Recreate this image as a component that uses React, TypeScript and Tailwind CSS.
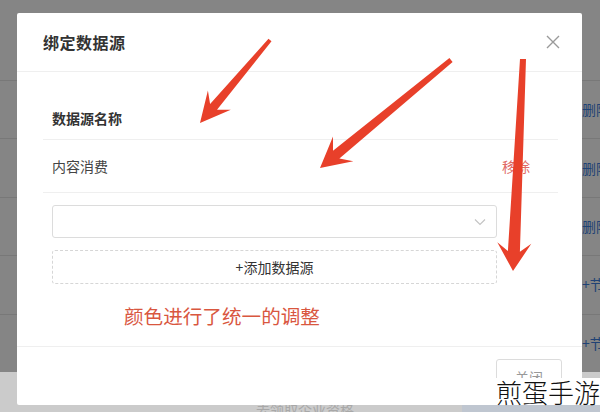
import React from "react";

type P = [number, number];

function arrowPoints(tail: P, tip: P, headLen: number, headW: number, tailW: number, neckW: number): string {
  const dx = tip[0] - tail[0];
  const dy = tip[1] - tail[1];
  const len = Math.hypot(dx, dy);
  const ux = dx / len;
  const uy = dy / len;
  const nx = -uy;
  const ny = ux;
  const base: P = [tip[0] - ux * headLen, tip[1] - uy * headLen];
  const neck: P = [tip[0] - ux * (headLen * 0.7), tip[1] - uy * (headLen * 0.7)];
  const pts: P[] = [
    [tail[0] + (nx * tailW) / 2, tail[1] + (ny * tailW) / 2],
    [neck[0] + (nx * neckW) / 2, neck[1] + (ny * neckW) / 2],
    [base[0] + (nx * headW) / 2, base[1] + (ny * headW) / 2],
    tip,
    [base[0] - (nx * headW) / 2, base[1] - (ny * headW) / 2],
    [neck[0] - (nx * neckW) / 2, neck[1] - (ny * neckW) / 2],
    [tail[0] - (nx * tailW) / 2, tail[1] - (ny * tailW) / 2],
  ];
  return pts.map((p) => p.map((v) => v.toFixed(1)).join(",")).join(" ");
}

const rows = ["删除", "删除", "删除", "+节点", "+节点"];

export default function App() {
  return (
    <div
      className="relative w-[600px] h-[412px] overflow-hidden bg-[#cbcbcb]"
      style={{ fontFamily: '"Noto Sans CJK SC", "Noto Sans", sans-serif' }}
    >
      {/* underlying page */}
      <div className="h-[372px] bg-white pt-[80px] flex flex-col">
        {rows.map((r, i) => (
          <div
            key={i}
            className="h-[60px] border-t border-[#e6e6e6] flex items-center pl-[582px] text-[14px] text-[#3f7fe0] whitespace-nowrap"
          >
            {r}
          </div>
        ))}
      </div>
      <div className="h-[40px] pl-[256px] pt-[30px] text-[14px] text-[#a8a8a8] whitespace-nowrap leading-none">
        去领取企业资格
      </div>

      {/* overlay */}
      <div className="absolute left-0 top-0 w-[600px] h-[372px] bg-black/[0.48]" />
      <div className="absolute left-[462px] top-[404px] w-[138px] h-[8px] bg-[#b7c3d3]/60" />

      {/* modal */}
      <div className="absolute left-[17px] top-[13px] w-[565px] h-[392px] bg-white rounded-[2px] flex flex-col">
        <div className="h-[59px] shrink-0 border-b border-[#efefef] flex items-center justify-between pl-[26px] pr-[24px]">
          <span className="text-[16px] font-bold text-[#333] tracking-[0.5px]">绑定数据源</span>
          <svg width="14" height="14" viewBox="0 0 14 14" className="mr-[-2px]">
            <path d="M1 1 L13 13 M13 1 L1 13" stroke="#9a9a9a" strokeWidth="1.4" fill="none" />
          </svg>
        </div>

        <div className="pt-[26px] pl-[26px] pr-[24px]">
          <div className="h-[42px] border-b border-[#efefef] flex items-center pl-[9px] text-[14px] font-bold text-[#333]">
            数据源名称
          </div>
          <div className="h-[53px] border-b border-[#efefef] flex items-center justify-between pl-[9px] pr-[28px] text-[14px] text-[#444]">
            <span>内容消费</span>
            <span className="text-[#e06a66]">移除</span>
          </div>
        </div>

        <div className="pl-[35px] pr-[85px] pt-[12px] flex flex-col gap-[12px]">
          <div className="h-[33px] border border-[#dcdcdc] rounded-[3px] flex items-center justify-end pr-[10px]">
            <svg width="12" height="8" viewBox="0 0 12 8">
              <path d="M1 1.5 L6 6.5 L11 1.5" stroke="#c4c4c4" strokeWidth="1.2" fill="none" />
            </svg>
          </div>
          <div className="h-[34px] border border-dashed border-[#d6d6d6] rounded-[3px] flex items-center justify-center text-[14px] text-[#333]">
            +添加数据源
          </div>
        </div>

        <div className="pl-[107px] pt-[19px] text-[19.6px] text-[#d9573f] leading-[26px] whitespace-nowrap">
          颜色进行了统一的调整
        </div>

        <div className="mt-[17px] border-t border-[#efefef] flex justify-end pr-[20px] pt-[12px]">
          <div className="w-[66px] h-[36px] border border-[#dcdcdc] rounded-[3px] flex items-center justify-center text-[14px] text-[#999]">
            关闭
          </div>
        </div>
      </div>

      {/* annotation arrows */}
      <svg className="absolute left-0 top-0" width="600" height="412" viewBox="0 0 600 412">
        <polygon points={arrowPoints([270, 40], [200, 123], 30, 30, 4, 9)} fill="#e8402a" />
        <polygon points={arrowPoints([451, 60], [320, 168], 30, 32, 5, 10)} fill="#e8402a" />
        <polygon points={arrowPoints([523, 59], [513, 271], 28, 34, 6, 12)} fill="#e8402a" />
      </svg>

      {/* watermark */}
      <div className="absolute left-[490px] top-[378px] w-[110px] h-[27px] bg-white flex items-center justify-end">
        <span className="text-[26px] leading-none text-[#111] font-light whitespace-nowrap">煎蛋手游</span>
      </div>
    </div>
  );
}
